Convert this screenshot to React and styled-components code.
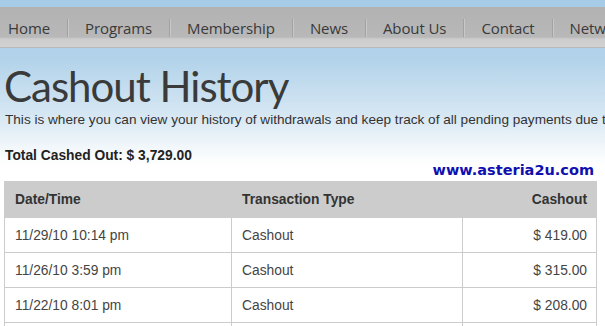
import React from 'react';
import styled, { createGlobalStyle } from 'styled-components';

const GlobalStyle = createGlobalStyle`
  html, body {
    margin: 0;
    padding: 0;
    overflow: hidden;
    background: #fff;
  }
`;

const navItems = ['Home', 'Programs', 'Membership', 'News', 'About Us', 'Contact', 'Network'];

const rows = [
  { date: '11/29/10 10:14 pm', type: 'Cashout', amount: '$ 419.00' },
  { date: '11/26/10 3:59 pm', type: 'Cashout', amount: '$ 315.00' },
  { date: '11/22/10 8:01 pm', type: 'Cashout', amount: '$ 208.00' },
  { date: '11/18/10 9:12 pm', type: 'Cashout', amount: '$ 512.00' },
];

class App extends React.Component {
  render() {
    return (
      <Page>
        <GlobalStyle />
        <NavBar>
          {navItems.map((item, i) => (
            <NavItem key={item} first={i === 0}>{item}</NavItem>
          ))}
        </NavBar>
        <Content>
          <Title>Cashout History</Title>
          <Intro>
            This is where you can view your history of withdrawals and keep track of all pending payments due to you.
          </Intro>
          <TotalRow>
            <Total>Total Cashed Out: $ 3,729.00</Total>
            <SiteLink>www.asteria2u.com</SiteLink>
          </TotalRow>
          <Table>
            <thead>
              <tr>
                <Th>Date/Time</Th>
                <Th>Transaction Type</Th>
                <Th right>Cashout</Th>
              </tr>
            </thead>
            <tbody>
              {rows.map((r) => (
                <tr key={r.date}>
                  <Td>{r.date}</Td>
                  <Td>{r.type}</Td>
                  <Td right>{r.amount}</Td>
                </tr>
              ))}
            </tbody>
          </Table>
        </Content>
      </Page>
    );
  }
}

const Page = styled.div`
  width: 605px;
  height: 326px;
  overflow: hidden;
  padding-top: 7px;
  box-sizing: border-box;
  background: linear-gradient(180deg, #a6cbe6 0px, #b3d3ea 60px, #d6e7f3 115px, #f4f8fb 150px, #ffffff 165px);
`;

const NavBar = styled.div`
  display: flex;
  height: 41px;
  box-sizing: border-box;
  padding-top: 12px;
  background: linear-gradient(180deg, #b2b2b2 0px, #b8b8b8 30px, #cdcdcd 32px, #d2d2d2 40px, #a0a0a0 41px);
  white-space: nowrap;
  overflow: hidden;
`;

const NavItem = styled.div`
  font-family: 'Open Sans', 'DejaVu Sans', sans-serif;
  font-size: 15px;
  font-weight: 500;
  letter-spacing: -0.1px;
  color: #3a3a3a;
  height: 18px;
  padding: 0 17px 0 ${(p) => (p.first ? '8px' : '17px')};
  border-right: 1px solid #a2a2a2;
  box-shadow: 1px 0 0 #c8c8c8;
  display: flex;
  align-items: center;
`;

const Content = styled.div`
  padding: 0 8px 0 4px;
`;

const Title = styled.h1`
  margin: 12px 0 0 0;
  font-family: 'Lato', 'Open Sans', sans-serif;
  font-weight: 400;
  font-size: 42px;
  letter-spacing: -1px;
  line-height: 52px;
  color: #3a3a3a;
`;

const Intro = styled.p`
  margin: 0 0 0 1px;
  font-family: 'Liberation Sans', Arial, sans-serif;
  font-size: 13.6px;
  line-height: 16px;
  color: #333;
  white-space: nowrap;
`;

const TotalRow = styled.div`
  display: flex;
  justify-content: space-between;
  align-items: flex-end;
  margin-top: 20px;
  padding-right: 3px;
`;

const Total = styled.div`
  font-family: 'Liberation Sans', Arial, sans-serif;
  font-weight: bold;
  font-size: 13.8px;
  color: #222;
  margin-left: 1px;
  margin-bottom: 18px;
`;

const SiteLink = styled.div`
  font-family: 'DejaVu Sans', Verdana, sans-serif;
  font-weight: bold;
  font-size: 14.5px;
  color: #1010b0;
  line-height: 18px;
  margin-bottom: 2px;
`;

const Table = styled.table`
  width: 593px;
  border-collapse: collapse;
  font-family: 'Liberation Sans', Arial, sans-serif;
  font-size: 13.8px;
`;

const Th = styled.th`
  background: #cccccc;
  height: 35px;
  padding: 0 9px 0 10px;
  text-align: ${(p) => (p.right ? 'right' : 'left')};
  font-weight: bold;
  color: #333;
  border: 1px solid #cccccc;
  &:nth-child(1) { width: 207px; }
  &:nth-child(2) { width: 211px; }
`;

const Td = styled.td`
  height: 34px;
  padding: 0 9px 0 10px;
  text-align: ${(p) => (p.right ? 'right' : 'left')};
  color: #444;
  background: #fff;
  border: 1px solid #cccccc;
`;

export default App;
